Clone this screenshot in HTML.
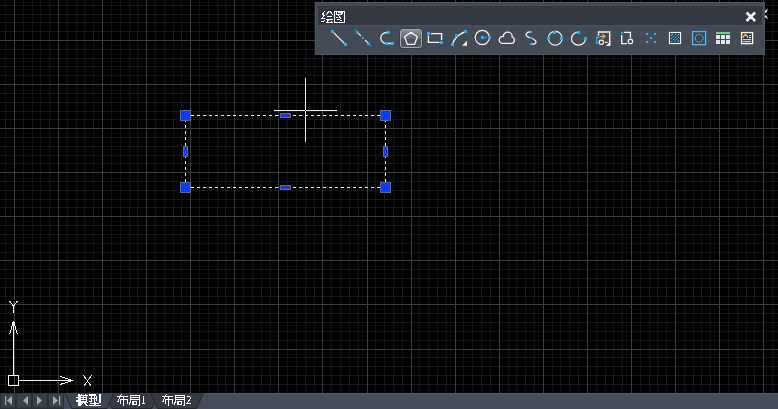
<!DOCTYPE html>
<html><head><meta charset="utf-8">
<style>
html,body{margin:0;padding:0;width:778px;height:409px;overflow:hidden;background:#000;}
svg{position:absolute;left:0;top:0;display:block;}
</style></head>
<body>
<svg width="778" height="409" viewBox="0 0 778 409">
<rect x="0" y="0" width="778" height="393" fill="#000"/>
<path d="M5.5 0V393M23.5 0V393M32.5 0V393M40.5 0V393M49.5 0V393M67.5 0V393M76.5 0V393M84.5 0V393M93.5 0V393M111.5 0V393M120.5 0V393M129.5 0V393M137.5 0V393M155.5 0V393M164.5 0V393M173.5 0V393M181.5 0V393M199.5 0V393M208.5 0V393M217.5 0V393M225.5 0V393M243.5 0V393M252.5 0V393M261.5 0V393M270.5 0V393M287.5 0V393M296.5 0V393M305.5 0V393M314.5 0V393M331.5 0V393M340.5 0V393M349.5 0V393M358.5 0V393M375.5 0V393M384.5 0V393M393.5 0V393M402.5 0V393M419.5 0V393M428.5 0V393M437.5 0V393M446.5 0V393M463.5 0V393M472.5 0V393M481.5 0V393M490.5 0V393M508.5 0V393M516.5 0V393M525.5 0V393M534.5 0V393M552.5 0V393M560.5 0V393M569.5 0V393M578.5 0V393M596.5 0V393M605.5 0V393M613.5 0V393M622.5 0V393M640.5 0V393M649.5 0V393M657.5 0V393M666.5 0V393M684.5 0V393M693.5 0V393M701.5 0V393M710.5 0V393M728.5 0V393M737.5 0V393M746.5 0V393M754.5 0V393M772.5 0V393M0 5.5H778M0 14.5H778M0 22.5H778M0 31.5H778M0 49.5H778M0 58.5H778M0 66.5H778M0 75.5H778M0 93.5H778M0 102.5H778M0 111.5H778M0 119.5H778M0 137.5H778M0 146.5H778M0 155.5H778M0 163.5H778M0 181.5H778M0 190.5H778M0 199.5H778M0 207.5H778M0 225.5H778M0 234.5H778M0 243.5H778M0 252.5H778M0 269.5H778M0 278.5H778M0 287.5H778M0 296.5H778M0 313.5H778M0 322.5H778M0 331.5H778M0 340.5H778M0 357.5H778M0 366.5H778M0 375.5H778M0 384.5H778" stroke="#14171b" stroke-width="1" fill="none"/><path d="M14.5 0V393M58.5 0V393M102.5 0V393M146.5 0V393M190.5 0V393M234.5 0V393M278.5 0V393M322.5 0V393M367.5 0V393M411.5 0V393M455.5 0V393M499.5 0V393M543.5 0V393M587.5 0V393M631.5 0V393M675.5 0V393M719.5 0V393M763.5 0V393M0 40.5H778M0 84.5H778M0 128.5H778M0 172.5H778M0 216.5H778M0 260.5H778M0 304.5H778M0 349.5H778" stroke="#363d47" stroke-width="1" fill="none"/>
<!-- dashed rectangle -->
<g stroke="#f4f4f4" stroke-width="1" fill="none" stroke-dasharray="3 3">
<path d="M185 115.5H386"/>
<path d="M185 187.5H386"/>
<path d="M185.5 113V188"/>
<path d="M385.5 113V188"/>
</g>
<!-- grips -->
<g fill="#0a3cff" stroke="#6d6a5c" stroke-width="1">
<rect x="180.5" y="110.5" width="10" height="10"/>
<rect x="380.5" y="110.5" width="10" height="10"/>
<rect x="180.5" y="182.5" width="10" height="10"/>
<rect x="380.5" y="182.5" width="10" height="10"/>
<rect x="280.5" y="113.5" width="10" height="4"/>
<rect x="280.5" y="185.5" width="10" height="4"/>
<rect x="183.5" y="146.5" width="4" height="10"/>
<rect x="383.5" y="146.5" width="4" height="10"/>
</g>
<!-- crosshair -->
<g stroke="#f2efea" stroke-width="1">
<path d="M305.5 78V142M274 110.5H337"/>
</g>
<rect x="305" y="110" width="1" height="1" fill="#000"/>
<!-- UCS icon -->
<g stroke="#f6f6f6" stroke-width="1" fill="none" shape-rendering="crispEdges">
<rect x="8.5" y="375.5" width="10" height="10"/>
<path d="M13.5 375V321"/>
<path d="M19 380.5H73"/>
<path d="M9.5 334.5L12 326.5M17.5 334.5L15 326.5"/>
<path d="M60 376.5L68 379M60 384.5L68 382"/>
<path d="M9.5 301L13.5 306L17.5 301M13.5 306V313"/>
<path d="M83.5 375.5L91.5 386.5M91.5 375.5L83.5 386.5"/>
</g>
<g fill="#f6f6f6" shape-rendering="crispEdges">
<rect x="12" y="322" width="3" height="4"/>
<rect x="68" y="379" width="3" height="3"/>
</g>

<!-- TOOLBAR -->
<rect x="315" y="2" width="450" height="53" fill="#4e5561"/>
<rect x="316" y="3" width="448" height="51" fill="#454b56"/>
<rect x="318" y="6" width="444" height="19" fill="#323842"/>
<rect x="316" y="25" width="448" height="1" fill="#4a515c"/>


<!-- icons -->
<g stroke="#ececec" stroke-width="1.3" fill="none">
<path d="M333.5 32.5L344.5 43.5" stroke-width="1.1"/>
<path d="M357.8 32.8L361 36M365 40L368.2 43.2" stroke-width="1.1"/>
<path d="M387 32.5A6 5.5 0 0 0 386.5 43.5H391"/>
</g>
<g fill="#1db3f3">
<rect x="331" y="30" width="3" height="3"/><rect x="344" y="43" width="3" height="3"/>
<rect x="362" y="37" width="2" height="2"/>
<rect x="387" y="31" width="3" height="3"/><rect x="385" y="42" width="3" height="3"/><rect x="391" y="42" width="3" height="3"/>
</g>
<g fill="#1db3f3">
<path d="M355.6 30.6L359.4 31.6L356.6 34.4Z"/><circle cx="355.3" cy="30.3" r="0.7"/>
<path d="M370.4 45.4L366.6 44.4L369.4 41.6Z"/><circle cx="370.7" cy="45.7" r="0.7"/>
</g>
<!-- polygon button -->
<defs>
<linearGradient id="bg1" x1="0" y1="0" x2="0" y2="1">
<stop offset="0" stop-color="#8a9098"/><stop offset="0.53" stop-color="#5e646c"/><stop offset="0.54" stop-color="#4d535b"/><stop offset="1" stop-color="#4f555d"/>
</linearGradient>
</defs>
<rect x="399.5" y="28.5" width="23" height="20" rx="3" fill="none" stroke="#383c44" stroke-width="1"/>
<rect x="400.5" y="29.5" width="21" height="18" rx="2.5" fill="url(#bg1)" stroke="#a3a8ae" stroke-width="1"/>
<path d="M411 32.2L417.4 36.7L414.6 44.3H407.3L404.6 36.7Z" fill="none" stroke="#f4f4f4" stroke-width="1.3" stroke-linejoin="round"/>
<!-- rect icon -->
<g stroke="#f4f4f4" stroke-width="1.4" fill="none">
<path d="M431 33.6H441.6V40M428.4 35.6V42.4H439.5"/>
<path d="M452.5 44.5Q454.5 36 465.5 31.5"/>
<circle cx="482.3" cy="37.5" r="7.1" stroke-width="1.2"/>
<path d="M502.3 43.4H511.5A3.3 3.3 0 0 0 512.2 37A4.4 4.4 0 0 0 503.2 36.4A3.5 3.5 0 0 0 502.3 43.4Z" stroke-width="1.3"/>
<path d="M531 32C527 31.5 522.5 35.5 530.5 38C538.5 40.5 537 45 531 44" stroke-width="1.3"/>
<circle cx="555.2" cy="38.3" r="6.9" stroke-width="1.2"/>
<path d="M578.5 32A7 6.6 0 1 0 585.5 38.5" stroke-width="1.2"/>
<path d="M598.5 35.8V32H609.7V42"/>
<circle cx="601.3" cy="42.3" r="2.2" stroke-width="1.2"/>
<path d="M604.8 42.4H607.5" stroke-width="1.2"/>
<path d="M621.7 35V43.6H627.2M624 32.4H630.4V37.8"/>
<circle cx="630.4" cy="41.4" r="2.2" stroke-width="1.2"/>
<rect x="669.5" y="32.5" width="11" height="11" fill="#2a2f38" stroke-width="1.2"/>
<rect x="741.6" y="32.6" width="11" height="11" fill="#2a3140"/>
</g>
<path d="M462 45.8H467V40.8Z" fill="#f4f4f4"/>
<path d="M606 45.9H610.5V41Z" fill="#f4f4f4"/>
<g fill="#1db3f3">
<rect x="427" y="32" width="3" height="3"/><rect x="440" y="41" width="3" height="3"/>
<rect x="451" y="43" width="3" height="3"/><rect x="455" y="34" width="3" height="3"/><rect x="464" y="30" width="3" height="3"/>
<rect x="481" y="36" width="3" height="3"/><rect x="485" y="37" width="2" height="1"/><rect x="488" y="36" width="3" height="3"/>
<rect x="530" y="31" width="2" height="2"/><rect x="530" y="37" width="2" height="2"/><rect x="530" y="43" width="2" height="2"/>
<rect x="553" y="31" width="3" height="3"/><rect x="547" y="37" width="3" height="3"/><rect x="560" y="37" width="3" height="3"/>
<rect x="577" y="31" width="3" height="3"/><rect x="584" y="37" width="3" height="3"/>
<rect x="621" y="32" width="2" height="2"/>
<rect x="646" y="33" width="2" height="2"/><rect x="654" y="33" width="2" height="2"/><rect x="650" y="37" width="2" height="2"/><rect x="646" y="41" width="2" height="2"/><rect x="654" y="41" width="2" height="2"/>
</g>
<path d="M599.5 37.3H596.7V43.5H598" stroke="#40b0f5" stroke-width="1.2" fill="none"/>
<path d="M600 36.5H604.8M602.3 34.1L605 36.5L602.3 38.6" stroke="#f0b43c" stroke-width="1.1" fill="none"/>
<!-- hatch lines -->
<path d="M671.5 35.5L672.5 34.5M671.5 38.5L675.5 34.5M671.5 41.5L678.5 34.5M674.5 41.5L678.5 37.5M677.5 41.5L678.5 40.5" stroke="#2f6e9a" stroke-width="1" fill="none"/>
<g fill="#4db8f8"><circle cx="671.5" cy="35.5" r="0.75"/><circle cx="672.5" cy="34.5" r="0.75"/><circle cx="671.5" cy="38.5" r="0.75"/><circle cx="673.5" cy="36.5" r="0.75"/><circle cx="675.5" cy="34.5" r="0.75"/><circle cx="671.5" cy="41.5" r="0.75"/><circle cx="673.5" cy="39.5" r="0.75"/><circle cx="675.5" cy="37.5" r="0.75"/><circle cx="677.5" cy="35.5" r="0.75"/><circle cx="678.5" cy="34.5" r="0.75"/><circle cx="674.5" cy="41.5" r="0.75"/><circle cx="676.5" cy="39.5" r="0.75"/><circle cx="678.5" cy="37.5" r="0.75"/><circle cx="677.5" cy="41.5" r="0.75"/><circle cx="678.5" cy="40.5" r="0.75"/></g>
<rect x="692.6" y="31.6" width="13" height="13" fill="#3e434c" stroke="#55b8f5" stroke-width="1.3"/>
<circle cx="699.2" cy="38.2" r="3.9" fill="none" stroke="#55b8f5" stroke-width="1.1" stroke-dasharray="1.6 0.8"/>
<rect x="716" y="32" width="14" height="2" fill="#70cf80"/>
<g fill="#e4e4e4">
<rect x="716" y="35" width="4" height="4"/><rect x="721" y="35" width="4" height="4"/><rect x="726" y="35" width="4" height="4"/>
<rect x="716" y="40" width="4" height="4"/><rect x="721" y="40" width="4" height="4"/><rect x="726" y="40" width="4" height="4"/>
</g>
<path d="M743.4 38V36.8Q743.8 35.2 745.5 35Q747.2 35.2 747.6 36.8V38" stroke="#f5c232" stroke-width="1.4" fill="none"/><circle cx="745.5" cy="34.6" r="0.9" fill="#f5c232"/>
<g fill="#b8d0ee">
<rect x="749" y="35" width="2" height="1.2"/><rect x="749" y="37" width="2" height="1.2"/>
<rect x="743" y="39" width="8" height="1.2"/><rect x="743" y="41" width="8" height="1.2"/>
</g>
<path d="M747.5 13.4L754.2 20.1M754.2 13.4L747.5 20.1" stroke="#fff" stroke-width="2.6" stroke-linecap="square"/>

<!-- TAB BAR -->
<rect x="0" y="393" width="778" height="16" fill="#464c59"/>
<rect x="200" y="393" width="578" height="1" fill="#4f5663"/>
<rect x="0" y="393" width="64" height="16" fill="#2b2f36"/>
<g fill="#3a4049">
<rect x="1" y="393.5" width="14" height="14"/>
<rect x="17" y="393.5" width="14" height="14"/>
<rect x="33" y="393.5" width="14" height="14"/>
<rect x="49" y="393.5" width="14" height="14"/>
</g>
<g fill="#a2a9b2">
<rect x="5" y="396" width="1.2" height="9"/>
<path d="M12 396L7 400.5L12 405Z"/>
<path d="M28 396L23 400.5L28 405Z"/>
<path d="M37 396L42 400.5L37 405Z"/>
<path d="M53 396L58 400.5L53 405Z"/>
<rect x="59" y="396" width="1.2" height="9"/>
</g>
<!-- inactive tabs -->
<g fill="#353a43" stroke="#23272d" stroke-width="1">
<path d="M105.5 393L112 408.5H151.9L158.4 393"/>
<path d="M151.2 393L157.7 408.5H196.5L203.6 393"/>
</g>
<rect x="106" y="393" width="97" height="1" fill="#353a43"/>
<path d="M65 393L71.5 408.5H107L113.5 393" fill="#3f4653" stroke="#23272d" stroke-width="1"/>
<rect x="65.5" y="393" width="47.5" height="1" fill="#3f4653"/>
<path transform="translate(321 11)" d="M3.5 0L1.5 3.5L3.5 4.5L0.5 7.5H4M0.5 11L4 9.5M8.5 0L4.5 4.5M8.5 0L12 4M6 5.5H11M4.5 8.5H12M7.5 9L5.5 11.5H11M10 10L12 12" stroke="#fff" stroke-width="1.1" fill="none" shape-rendering="crispEdges"/>
<path transform="translate(334 11)" d="M0.5 0V12M0.5 0.5H10.5V12M0.5 11.5H10.5M2.5 1V3M4 1.5H9M2 3.5H7M8.5 2L6.5 4.5M4.5 4.5L7 7.5M1.5 6.5H3.5M3 8.5H5.5M5.5 9.5H7.5" stroke="#fff" stroke-width="1.05" fill="none" shape-rendering="crispEdges"/>
<g shape-rendering="crispEdges"><g fill="#fff"><rect x="78" y="394" width="2" height="12"/><rect x="76" y="397" width="4" height="1"/><rect x="76" y="400" width="2" height="2"/><rect x="80" y="395" width="8" height="1"/><rect x="81" y="394" width="1" height="1"/><rect x="85" y="394" width="1" height="1"/><rect x="80" y="396" width="7" height="6"/><rect x="80" y="402" width="8" height="1"/><rect x="80" y="403" width="3" height="1"/><rect x="79" y="404" width="3" height="1"/><rect x="79" y="405" width="2" height="1"/><rect x="84" y="403" width="2" height="1"/><rect x="85" y="404" width="2" height="1"/><rect x="86" y="405" width="2" height="1"/><rect x="89" y="394" width="7" height="2"/><rect x="89" y="398" width="7" height="1"/><rect x="91" y="394" width="1" height="8"/><rect x="94" y="394" width="1" height="8"/><rect x="96" y="396" width="1" height="5"/><rect x="99" y="394" width="2" height="9"/><rect x="89" y="401" width="2" height="1"/><rect x="94" y="402" width="2" height="4"/><rect x="90" y="403" width="9" height="1"/><rect x="89" y="405" width="12" height="1"/></g><g fill="#3f4653"><rect x="81" y="396" width="2" height="1"/><rect x="84" y="396" width="2" height="1"/><rect x="81" y="398" width="2" height="1"/><rect x="84" y="398" width="2" height="1"/><rect x="81" y="400" width="5" height="1"/></g></g>
<path transform="translate(117 394)" d="M0 2.5H11M4.5 0L0.5 8.5M3.5 5.5H10.5V10M3.5 5V10M6.5 3V12" stroke="#fff" stroke-width="1.1" fill="none" shape-rendering="crispEdges"/>
<path transform="translate(129 394)" d="M1.5 1.5H10.5M1.5 1V6L0.5 11.5M1.5 3.5H10M1.5 5.5H10.5M10.5 1.5V11.5H8.5M4 7.5H7.5V10.5H4Z" stroke="#fff" stroke-width="1.1" fill="none" shape-rendering="crispEdges"/>
<path transform="translate(142 396)" d="M1.5 0.5V7.5M0 7.5H3M0.5 1.5L1.5 0.5" stroke="#fff" stroke-width="1.1" fill="none" shape-rendering="crispEdges"/>
<path transform="translate(162 394)" d="M0 2.5H11M4.5 0L0.5 8.5M3.5 5.5H10.5V10M3.5 5V10M6.5 3V12" stroke="#fff" stroke-width="1.1" fill="none" shape-rendering="crispEdges"/>
<path transform="translate(174 394)" d="M1.5 1.5H10.5M1.5 1V6L0.5 11.5M1.5 3.5H10M1.5 5.5H10.5M10.5 1.5V11.5H8.5M4 7.5H7.5V10.5H4Z" stroke="#fff" stroke-width="1.1" fill="none" shape-rendering="crispEdges"/>
<path transform="translate(186 396)" d="M0.5 1.5Q1 0.5 2.5 0.5Q4.3 0.5 4.3 2Q4.3 3.5 0.5 7.5H4.8" stroke="#fff" stroke-width="1.1" fill="none" shape-rendering="crispEdges"/>
<path d="M765 12.3L767.6 9.3M765 15.8L767.6 18.7" stroke="#d8d8d8" stroke-width="1.2"/><rect x="765" y="10.5" width="1.5" height="2" fill="#f0f0f0"/><rect x="765" y="15.5" width="1.5" height="2" fill="#f0f0f0"/>
</svg>
</body></html>
